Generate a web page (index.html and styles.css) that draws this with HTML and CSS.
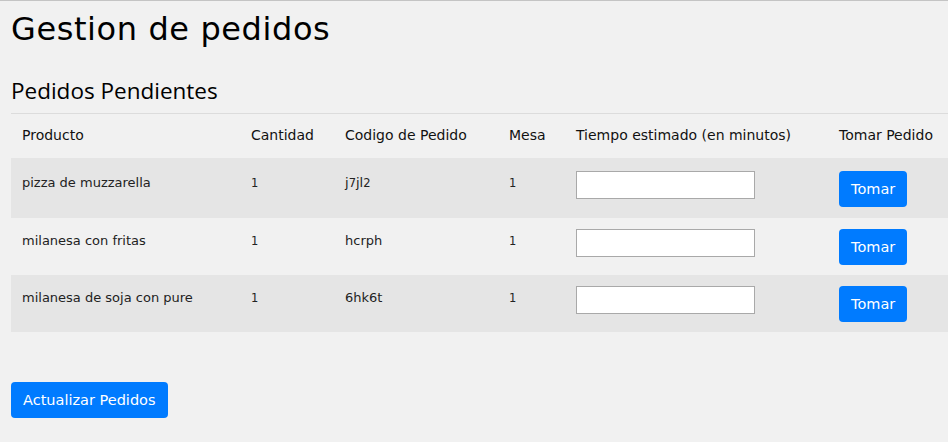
FILE: index.html
```html
<!DOCTYPE html>
<html lang="es">
<head>
<meta charset="utf-8">
<title>Gestion de pedidos</title>
<link rel="stylesheet" href="styles.css">
</head>
<body>
<main class="page">
  <h1 class="title">Gestion de pedidos</h1>
  <h2 class="subtitle">Pedidos Pendientes</h2>
  <table class="orders">
    <colgroup>
      <col class="c-prod"><col class="c-cant"><col class="c-cod"><col class="c-mesa"><col class="c-tiempo"><col class="c-tomar">
    </colgroup>
    <thead>
      <tr>
        <th>Producto</th><th>Cantidad</th><th>Codigo de Pedido</th><th>Mesa</th><th>Tiempo estimado (en minutos)</th><th>Tomar Pedido</th>
      </tr>
    </thead>
    <tbody>
      <tr class="odd">
        <td>pizza de muzzarella</td><td class="num">1</td><td>j<span class="dig">7</span>jl<span class="dig">2</span></td><td class="num">1</td>
        <td><input class="minutes" type="text"></td><td><button class="btn">Tomar</button></td>
      </tr>
      <tr>
        <td>milanesa con fritas</td><td class="num">1</td><td>hcrph</td><td class="num">1</td>
        <td><input class="minutes" type="text"></td><td><button class="btn">Tomar</button></td>
      </tr>
      <tr class="odd">
        <td>milanesa de soja con pure</td><td class="num">1</td><td>6hk6t</td><td class="num">1</td>
        <td><input class="minutes" type="text"></td><td><button class="btn">Tomar</button></td>
      </tr>
    </tbody>
  </table>
  <div class="actions">
    <button class="btn">Actualizar Pedidos</button>
  </div>
</main>
</body>
</html>
```
FILE: styles.css
```css
html, body {
  margin: 0;
  padding: 0;
  background: #f1f1f1;
  overflow: hidden;
}
body {
  border-top: 1px solid #c4c4c4;
  font-family: "DejaVu Sans", sans-serif;
  color: #212529;
  font-size: 14px;
}
.page {
  padding: 0 0 0 11px;
}
.title {
  margin: 0;
  padding-top: 8px;
  font-family: "DejaVu Sans", sans-serif;
  font-weight: 400;
  font-size: 32px;
  letter-spacing: 0.6px;
  line-height: 40px;
  color: #000;
}
.subtitle {
  margin: 0;
  padding-top: 26px;
  padding-bottom: 6px;
  font-family: "Open Sans", sans-serif;
  font-weight: 400;
  font-size: 22.5px;
  line-height: 32px;
  color: #000;
}
.orders {
  border-collapse: collapse;
  table-layout: fixed;
  width: 937px;
}
.c-prod { width: 229px; }
.c-cant { width: 94px; }
.c-cod { width: 164px; }
.c-mesa { width: 67px; }
.c-tiempo { width: 263px; }
.c-tomar { width: 120px; }
.orders th, .orders td {
  text-align: left;
  vertical-align: top;
  white-space: nowrap;
  font-weight: 400;
}
.orders th {
  border-top: 1px solid #dcdcdc;
  padding: 11px 11px 12px;
  font-size: 14px;
  line-height: 21px;
  color: #111;
}
.orders td {
  padding: 11px 11px 10px;
  font-size: 13px;
  line-height: 24px;
  color: #222;
}
.orders tbody tr:first-child td {
  padding-top: 13px;
  padding-bottom: 11px;
}
.orders td.num, .dig {
  font-size: 11.5px;
}
.orders tr.odd td {
  background: #e5e5e5;
}
.minutes {
  box-sizing: border-box;
  display: block;
  width: 179px;
  height: 28px;
  margin: 0;
  padding: 0 4px;
  border: 1px solid #a9a9a9;
  background: #fff;
}
.btn {
  display: inline-block;
  height: 36px;
  padding: 0 12px;
  border: none;
  border-radius: 4px;
  background: #007bff;
  color: #fff;
  font-family: "DejaVu Sans", sans-serif;
  font-size: 14.5px;
  cursor: pointer;
}
.actions {
  padding-top: 50px;
}
```
